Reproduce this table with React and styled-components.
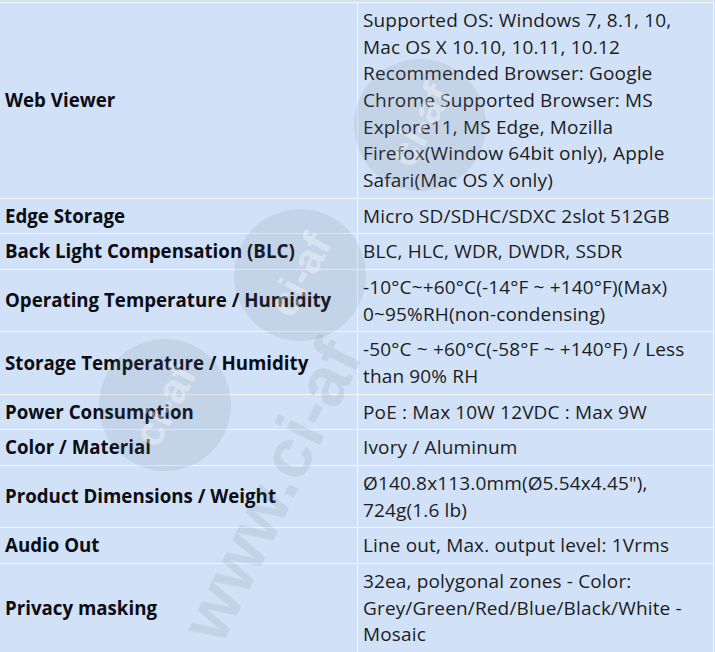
import React from "react";
import styled, { createGlobalStyle } from "styled-components";

const Global = createGlobalStyle`
  html, body { margin: 0; padding: 0; background: #ffffff; }
  body { font-family: "Open Sans", "Noto Sans", sans-serif; }
`;

const Page = styled.div`
  position: relative;
  width: 715px;
  height: 652px;
  overflow: hidden;
  background: #d1e2f8;
  padding-top: 2px;
  box-sizing: border-box;
`;

const Table = styled.div`
  display: grid;
  grid-template-columns: 357px 355px;
  gap: 1px;
  background: #f4f8fe;
  border-top: 1px solid #f4f8fe;
  border-right: 1px solid #f4f8fe;
  width: 714px;
  box-sizing: border-box;
`;

const Cell = styled.div`
  background: #d1e2f8;
  padding: 4px 5px;
  line-height: 26.67px;
  color: ${(p) => (p.$label ? "#0b0c14" : "#1c1c22")};
  font-size: ${(p) => (p.$label ? "18.7px" : "19px")};
  letter-spacing: ${(p) => (p.$label ? "0" : "0.15px")};
  font-weight: ${(p) => (p.$label ? 700 : 400)};
  display: flex;
  align-items: center;
  white-space: nowrap;
`;

const Lines = styled.div`
  display: flex;
  flex-direction: column;
`;

const Watermark = styled.div`
  position: absolute;
  inset: 0;
  pointer-events: none;
`;

const Badge = styled.div`
  position: absolute;
  left: ${(p) => p.$x - 66}px;
  top: ${(p) => p.$y - 66}px;
  width: 132px;
  height: 132px;
  border-radius: 50%;
  background: rgba(115, 120, 132, 0.14);
  display: flex;
  align-items: center;
  justify-content: center;
  transform: rotate(-62deg);
  color: rgba(255, 255, 255, 0.4);
  font-family: "Liberation Sans", sans-serif;
  font-weight: 700;
  font-size: 42px;
`;

const Url = styled.div`
  position: absolute;
  left: 200px;
  top: 600px;
  transform: rotate(-64deg);
  transform-origin: left center;
  color: rgba(115, 120, 132, 0.15);
  font-family: "Liberation Sans", sans-serif;
  font-weight: 700;
  font-size: 70px;
  line-height: 72px;
  white-space: nowrap;
`;

const rows = [
  [
    "Web Viewer",
    [
      "Supported OS: Windows 7, 8.1, 10,",
      "Mac OS X 10.10, 10.11, 10.12",
      "Recommended Browser: Google",
      "Chrome Supported Browser: MS",
      "Explore11, MS Edge, Mozilla",
      "Firefox(Window 64bit only), Apple",
      "Safari(Mac OS X only)",
    ],
  ],
  ["Edge Storage", ["Micro SD/SDHC/SDXC 2slot 512GB"]],
  ["Back Light Compensation (BLC)", ["BLC, HLC, WDR, DWDR, SSDR"]],
  [
    "Operating Temperature / Humidity",
    ["-10°C~+60°C(-14°F ~ +140°F)(Max)", "0~95%RH(non-condensing)"],
  ],
  [
    "Storage Temperature / Humidity",
    ["-50°C ~ +60°C(-58°F ~ +140°F) / Less", "than 90% RH"],
  ],
  ["Power Consumption", ["PoE : Max 10W 12VDC : Max 9W"]],
  ["Color / Material", ["Ivory / Aluminum"]],
  [
    "Product Dimensions / Weight",
    ["Ø140.8x113.0mm(Ø5.54x4.45\"),", "724g(1.6 lb)"],
  ],
  ["Audio Out", ["Line out, Max. output level: 1Vrms"]],
  [
    "Privacy masking",
    [
      "32ea, polygonal zones - Color:",
      "Grey/Green/Red/Blue/Black/White -",
      "Mosaic",
    ],
  ],
];

export default function App() {
  return (
    <>
      <Global />
      <Page>
        <Table>
          {rows.map(([label, lines]) => (
            <React.Fragment key={label}>
              <Cell $label>{label}</Cell>
              <Cell>
                <Lines>
                  {lines.map((l) => (
                    <span key={l}>{l}</span>
                  ))}
                </Lines>
              </Cell>
            </React.Fragment>
          ))}
        </Table>
        <Watermark aria-hidden="true">
          <Badge $x={420} $y={125}>ci-af</Badge>
          <Badge $x={300} $y={275}>ci-af</Badge>
          <Badge $x={165} $y={405}>ci-af</Badge>
          <Url>www.ci-af</Url>
        </Watermark>
      </Page>
    </>
  );
}
